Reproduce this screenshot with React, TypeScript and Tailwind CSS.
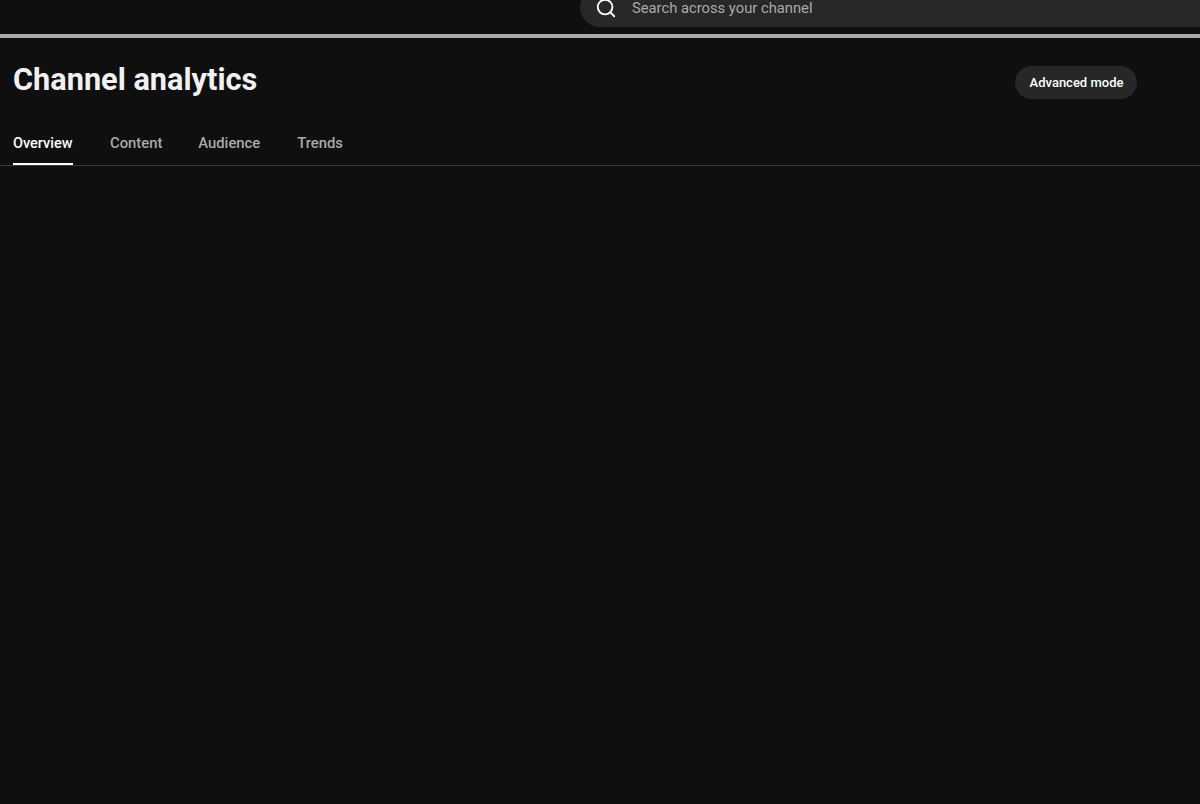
import { Search } from "lucide-react";

const tabs = ["Overview", "Content", "Audience", "Trends"];

export default function App() {
  return (
    <div className="h-[804px] w-[1200px] overflow-hidden bg-[#0f0f0f] font-['Roboto',sans-serif]">
      <header className="flex h-[34px] items-end overflow-hidden pb-[7px] pl-[580px]">
        <div className="flex h-[40px] w-[640px] shrink-0 items-center rounded-l-[20px] bg-[#282828] pl-[15px] pt-[2px]">
          <Search className="h-[22px] w-[22px] text-white" strokeWidth={2} />
          <span className="ml-[15px] text-[14.75px] text-[#aaaaaa]">Search across your channel</span>
        </div>
      </header>
      <div className="h-[4px] bg-[#aaaaaa]" />
      <section className="flex h-[128px] flex-col border-b border-[#3a3a3a]">
        <div className="flex items-start justify-between pl-[13px] pr-[63px]">
          <h1 className="mt-[22px] text-[30.7px] font-bold leading-[40px] text-[#f1f1f1]">Channel analytics</h1>
          <button className="mt-[28px] flex h-[33px] w-[122px] items-center justify-center rounded-full bg-[#272727] pl-px pt-px text-[13px] font-medium text-white">
            Advanced mode
          </button>
        </div>
        <nav className="mt-auto flex pl-[13px]">
          <div className="flex h-[42px] w-[60px] items-center border-b-2 border-white pt-[2px] text-[14.5px] font-medium text-white">
            {tabs[0]}
          </div>
          <div className="ml-[37px] flex h-[42px] items-center pb-[2px] text-[14.8px] font-medium text-[#aaaaaa]">{tabs[1]}</div>
          <div className="ml-[36px] flex h-[42px] items-center pb-[2px] text-[14.8px] font-medium text-[#aaaaaa]">{tabs[2]}</div>
          <div className="ml-[37px] flex h-[42px] items-center pb-[2px] text-[14.8px] font-medium text-[#aaaaaa]">{tabs[3]}</div>
        </nav>
      </section>
    </div>
  );
}
